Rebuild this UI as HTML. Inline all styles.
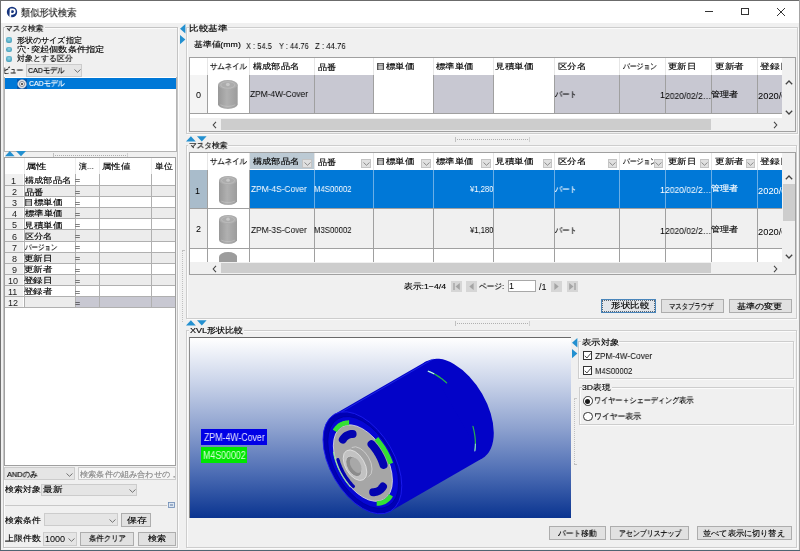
<!DOCTYPE html><html lang="ja"><head><meta charset="utf-8"><title>類似形状検索</title><style>
*{margin:0;padding:0;box-sizing:border-box}
html,body{width:800px;height:551px;overflow:hidden;background:#f0f0f0}
body{position:relative;font-family:"Liberation Sans",sans-serif;font-size:9px;color:#000}
div,span,svg{position:absolute}
.t{white-space:nowrap;line-height:10px;will-change:transform}
.k{-webkit-text-stroke:0.15px currentColor}
.btn{background:#e1e1e1;border:1px solid #adadad}
</style></head><body>
<div style="left:0px;top:0px;width:800px;height:23px;background:#fff"></div>
<div style="left:0px;top:0px;width:800px;height:1px;background:#6b6b6b"></div>
<div style="left:0px;top:0px;width:1px;height:551px;background:#707070"></div>
<div style="left:799px;top:0px;width:1px;height:551px;background:#a4a4a4"></div>
<div style="left:0px;top:550px;width:800px;height:1px;background:#4f6472"></div>
<svg style="left:5.8px;top:6px" width="12" height="12" viewBox="0 0 12 12"><circle cx="6" cy="6" r="5.2" fill="#15347e"/><path d="M4.3 10.9L4.6 3.2" stroke="#fff" stroke-width="1.7"/><path d="M4.2 3.4H6.6A2.2 2.2 0 0 1 6.6 7.8H5" fill="none" stroke="#fff" stroke-width="1.7"/><circle cx="6.4" cy="5.6" r="0.8" fill="#15347e"/></svg>
<span class="t k" style="left:20.68px;top:7.60px;font-size:9.5px;color:#1a1a1a;transform:scaleX(0.922);transform-origin:0 0;">類似形状検索</span>
<div style="left:705px;top:11px;width:8px;height:1px;background:#333"></div>
<div style="left:741px;top:8px;width:8px;height:7px;border:1px solid #333"></div>
<svg style="left:777px;top:8px" width="8" height="8" viewBox="0 0 8 8"><path d="M0 0L8 8M8 0L0 8" stroke="#333" stroke-width="1"/></svg>
<div style="left:3px;top:27.3px;width:174.5px;height:521px;border:1px solid #c4c4c4;box-shadow:inset 1px 1px 0 #fbfbfb,1px 1px 0 #fbfbfb"></div>
<div style="left:4.5px;top:23px;width:40.5px;height:8px;background:#f0f0f0"></div>
<span class="t k" style="left:4.74px;top:24.00px;font-size:8px;transform:scaleX(0.956);transform-origin:0 0;">マスタ検索</span>
<div style="left:6.2px;top:37.0px;width:6.2px;height:5.8px;background:radial-gradient(circle at 50% 40%,#8fd4e6,#2f8fae);border-radius:2.2px"></div>
<span class="t k" style="left:16.80px;top:36.20px;font-size:8px;transform:scaleX(1.011);transform-origin:0 0;">形状のサイズ指定</span>
<div style="left:6.2px;top:46.5px;width:6.2px;height:5.8px;background:radial-gradient(circle at 50% 40%,#8fd4e6,#2f8fae);border-radius:2.2px"></div>
<span class="t k" style="left:16.80px;top:45.00px;font-size:8px;transform:scaleX(1.152);transform-origin:0 0;">穴･突起個数条件指定</span>
<div style="left:6.2px;top:56.0px;width:6.2px;height:5.8px;background:radial-gradient(circle at 50% 40%,#8fd4e6,#2f8fae);border-radius:2.2px"></div>
<span class="t k" style="left:16.80px;top:54.40px;font-size:8px;transform:scaleX(0.995);transform-origin:0 0;">対象とする区分</span>
<span class="t k" style="left:3.25px;top:65.80px;font-size:8px;transform:scaleX(0.845);transform-origin:0 0;">ビュー</span>
<div style="left:26.1px;top:64.4px;width:55.7px;height:12.4px;background:#e5e5e5;border:1px solid #cccccc"></div>
<span class="t k" style="left:28.20px;top:65.80px;font-size:8px;transform:scaleX(0.888);transform-origin:0 0;">CADモデル</span>
<svg style="left:73.5px;top:69.2px" width="7" height="4"><path d="M0.5 0.5L3.5 3.3L6.5 0.5" fill="none" stroke="#555" stroke-width="0.8"/></svg>
<div style="left:4px;top:77px;width:173px;height:75px;background:#fff;border:1px solid #b4b4b4;border-top:none"></div>
<div style="left:5px;top:77.8px;width:171px;height:10.8px;background:#0078d7"></div>
<svg style="left:17px;top:78.5px" width="10" height="10" viewBox="0 0 10 10"><rect x="0" y="0" width="10" height="10" fill="#0a3a8a" opacity="0.55"/><circle cx="5" cy="5" r="4.3" fill="#e6e6e6" stroke="#b8c8d8" stroke-width="0.6"/><circle cx="5" cy="5" r="2.6" fill="none" stroke="#8a8a9a" stroke-width="0.9"/><circle cx="5" cy="5" r="1" fill="#333"/></svg>
<span class="t k" style="left:28.90px;top:78.90px;font-size:8px;color:#fff;transform:scaleX(0.871);transform-origin:0 0;">CADモデル</span>
<svg style="left:5px;top:151.4px" width="22" height="6"><path d="M0 5.2L4.8 0L9.6 5.2Z" fill="#2390d0"/><path d="M11 0L21 0L16 5.2Z" fill="#2390d0"/></svg>
<div style="left:53px;top:154.5px;width:74.5px;height:1px;border-top:1px dotted #b0b0b0"></div>
<div style="left:53px;top:152.5px;width:1px;height:5px;background:#c0c0c0"></div>
<div style="left:126.5px;top:152.5px;width:1px;height:5px;background:#d0d0d0"></div>
<div style="left:4.2px;top:157px;width:171.8px;height:308.5px;background:#fff;border:1px solid #a0a0a0"></div>
<div style="left:5.2px;top:174.1px;width:18.3px;height:11.15px;background:#f0f0f0"></div>
<div style="left:5.2px;top:185.25px;width:18.3px;height:11.15px;background:#f0f0f0"></div>
<div style="left:23.5px;top:185.25px;width:151.5px;height:11.15px;background:#ececec"></div>
<div style="left:5.2px;top:196.4px;width:18.3px;height:11.15px;background:#f0f0f0"></div>
<div style="left:5.2px;top:207.55px;width:18.3px;height:11.15px;background:#f0f0f0"></div>
<div style="left:23.5px;top:207.55px;width:151.5px;height:11.15px;background:#ececec"></div>
<div style="left:5.2px;top:218.7px;width:18.3px;height:11.15px;background:#f0f0f0"></div>
<div style="left:5.2px;top:229.85px;width:18.3px;height:11.15px;background:#f0f0f0"></div>
<div style="left:23.5px;top:229.85px;width:151.5px;height:11.15px;background:#ececec"></div>
<div style="left:5.2px;top:241.0px;width:18.3px;height:11.15px;background:#f0f0f0"></div>
<div style="left:5.2px;top:252.14999999999998px;width:18.3px;height:11.15px;background:#f0f0f0"></div>
<div style="left:23.5px;top:252.14999999999998px;width:151.5px;height:11.15px;background:#ececec"></div>
<div style="left:5.2px;top:263.3px;width:18.3px;height:11.15px;background:#f0f0f0"></div>
<div style="left:5.2px;top:274.45px;width:18.3px;height:11.15px;background:#f0f0f0"></div>
<div style="left:23.5px;top:274.45px;width:151.5px;height:11.15px;background:#ececec"></div>
<div style="left:5.2px;top:285.6px;width:18.3px;height:11.15px;background:#f0f0f0"></div>
<div style="left:5.2px;top:296.75px;width:18.3px;height:11.15px;background:#f0f0f0"></div>
<div style="left:23.5px;top:296.75px;width:51.7px;height:11.15px;background:#ececec"></div>
<div style="left:75.2px;top:296.75px;width:99.8px;height:11.15px;background:#c8c8d2"></div>
<div style="left:5.2px;top:184.75px;width:169.8px;height:1px;background:#b0b0b0"></div>
<div style="left:5.2px;top:195.9px;width:169.8px;height:1px;background:#b0b0b0"></div>
<div style="left:5.2px;top:207.05px;width:169.8px;height:1px;background:#b0b0b0"></div>
<div style="left:5.2px;top:218.2px;width:169.8px;height:1px;background:#b0b0b0"></div>
<div style="left:5.2px;top:229.35px;width:169.8px;height:1px;background:#b0b0b0"></div>
<div style="left:5.2px;top:240.5px;width:169.8px;height:1px;background:#b0b0b0"></div>
<div style="left:5.2px;top:251.64999999999998px;width:169.8px;height:1px;background:#b0b0b0"></div>
<div style="left:5.2px;top:262.8px;width:169.8px;height:1px;background:#b0b0b0"></div>
<div style="left:5.2px;top:273.95px;width:169.8px;height:1px;background:#b0b0b0"></div>
<div style="left:5.2px;top:285.1px;width:169.8px;height:1px;background:#b0b0b0"></div>
<div style="left:5.2px;top:296.25px;width:169.8px;height:1px;background:#b0b0b0"></div>
<div style="left:5.2px;top:307.4px;width:169.8px;height:1px;background:#b0b0b0"></div>
<div style="left:23.5px;top:174.1px;width:1px;height:133.8px;background:#b0b0b0"></div>
<div style="left:23.5px;top:158px;width:1px;height:16.099999999999994px;background:#ececec"></div>
<div style="left:75.2px;top:174.1px;width:1px;height:133.8px;background:#b0b0b0"></div>
<div style="left:75.2px;top:158px;width:1px;height:16.099999999999994px;background:#ececec"></div>
<div style="left:99px;top:174.1px;width:1px;height:133.8px;background:#b0b0b0"></div>
<div style="left:99px;top:158px;width:1px;height:16.099999999999994px;background:#ececec"></div>
<div style="left:150.5px;top:174.1px;width:1px;height:133.8px;background:#b0b0b0"></div>
<div style="left:150.5px;top:158px;width:1px;height:16.099999999999994px;background:#ececec"></div>
<span class="t k" style="left:25.61px;top:162.00px;font-size:8px;transform:scaleX(1.293);transform-origin:0 0;">属性</span>
<span class="t k" style="left:78.80px;top:161.50px;font-size:8px;transform:scaleX(0.947);transform-origin:0 0;">演…</span>
<span class="t k" style="left:101.82px;top:162.00px;font-size:8px;transform:scaleX(1.182);transform-origin:0 0;">属性値</span>
<span class="t k" style="left:154.50px;top:162.00px;font-size:8px;transform:scaleX(1.100);transform-origin:0 0;">単位</span>
<span class="t" style="left:11.30px;top:175.80px;font-size:9px;color:#222;">1</span>
<span class="t k" style="left:25.00px;top:175.90px;font-size:8px;transform:scaleX(1.154);transform-origin:0 0;">構成部品名</span>
<span class="t" style="left:75.30px;top:175.40px;font-size:9px;">=</span>
<span class="t" style="left:12.00px;top:186.95px;font-size:9px;color:#222;">2</span>
<span class="t k" style="left:25.00px;top:188.05px;font-size:8px;transform:scaleX(1.167);transform-origin:0 0;">品番</span>
<span class="t" style="left:75.30px;top:186.55px;font-size:9px;">=</span>
<span class="t" style="left:12.00px;top:198.10px;font-size:9px;color:#222;">3</span>
<span class="t k" style="left:23.79px;top:198.20px;font-size:8px;transform:scaleX(1.208);transform-origin:0 0;">目標単価</span>
<span class="t" style="left:75.30px;top:197.70px;font-size:9px;">=</span>
<span class="t" style="left:12.00px;top:209.25px;font-size:9px;color:#222;">4</span>
<span class="t k" style="left:25.00px;top:209.35px;font-size:8px;transform:scaleX(1.169);transform-origin:0 0;">標準単価</span>
<span class="t" style="left:75.30px;top:208.85px;font-size:9px;">=</span>
<span class="t" style="left:12.00px;top:220.40px;font-size:9px;color:#222;">5</span>
<span class="t k" style="left:23.79px;top:220.50px;font-size:8px;transform:scaleX(1.208);transform-origin:0 0;">見積単価</span>
<span class="t" style="left:75.30px;top:220.00px;font-size:9px;">=</span>
<span class="t" style="left:12.00px;top:231.55px;font-size:9px;color:#222;">6</span>
<span class="t k" style="left:25.00px;top:231.65px;font-size:8px;transform:scaleX(1.130);transform-origin:0 0;">区分名</span>
<span class="t" style="left:75.30px;top:231.15px;font-size:9px;">=</span>
<span class="t" style="left:12.00px;top:242.70px;font-size:9px;color:#222;">7</span>
<span class="t k" style="left:25.00px;top:242.80px;font-size:8px;transform:scaleX(0.808);transform-origin:0 0;">バージョン</span>
<span class="t" style="left:75.30px;top:242.30px;font-size:9px;">=</span>
<span class="t" style="left:12.00px;top:253.85px;font-size:9px;color:#222;">8</span>
<span class="t k" style="left:23.82px;top:253.95px;font-size:8px;transform:scaleX(1.182);transform-origin:0 0;">更新日</span>
<span class="t" style="left:75.30px;top:253.45px;font-size:9px;">=</span>
<span class="t" style="left:12.00px;top:265.00px;font-size:9px;color:#222;">9</span>
<span class="t k" style="left:23.82px;top:265.10px;font-size:8px;transform:scaleX(1.182);transform-origin:0 0;">更新者</span>
<span class="t" style="left:75.30px;top:264.60px;font-size:9px;">=</span>
<span class="t" style="left:8.40px;top:276.15px;font-size:9px;color:#222;">10</span>
<span class="t k" style="left:23.82px;top:276.25px;font-size:8px;transform:scaleX(1.182);transform-origin:0 0;">登録日</span>
<span class="t" style="left:75.30px;top:275.75px;font-size:9px;">=</span>
<span class="t" style="left:8.40px;top:287.30px;font-size:9px;color:#222;">11</span>
<span class="t k" style="left:23.82px;top:287.40px;font-size:8px;transform:scaleX(1.182);transform-origin:0 0;">登録者</span>
<span class="t" style="left:75.30px;top:286.90px;font-size:9px;">=</span>
<span class="t" style="left:8.40px;top:298.45px;font-size:9px;color:#222;">12</span>
<span class="t" style="left:75.30px;top:298.05px;font-size:9px;">=</span>
<div style="left:4.4px;top:467.2px;width:70.6px;height:12.8px;background:#e5e5e5;border:1px solid #cccccc"></div>
<span class="t k" style="left:6.75px;top:470.00px;font-size:8px;transform:scaleX(0.923);transform-origin:0 0;">ANDのみ</span>
<svg style="left:66px;top:473px" width="7" height="4"><path d="M0.5 0.5L3.5 3.3L6.5 0.5" fill="none" stroke="#555" stroke-width="0.8"/></svg>
<div style="left:77.5px;top:467.2px;width:98.5px;height:12.8px;background:#f5f5f5;border:1px solid #cccccc"></div>
<span class="t k" style="left:80.00px;top:469.50px;font-size:8px;color:#8a8a8a;transform:scaleX(1.022);transform-origin:0 0;">検索条件の組み合わせの，</span>
<span class="t k" style="left:5.00px;top:484.60px;font-size:8px;transform:scaleX(1.110);transform-origin:0 0;">検索対象</span>
<div style="left:41.3px;top:483.7px;width:96.2px;height:12.3px;background:#e5e5e5;border:1px solid #cccccc"></div>
<span class="t k" style="left:42.80px;top:484.60px;font-size:8px;transform:scaleX(1.200);transform-origin:0 0;">最新</span>
<svg style="left:129px;top:488.5px" width="7" height="4"><path d="M0.5 0.5L3.5 3.3L6.5 0.5" fill="none" stroke="#555" stroke-width="0.8"/></svg>
<div style="left:4.5px;top:505px;width:162.5px;height:1px;background:#c8c8c8"></div>
<svg style="left:168px;top:502px" width="7" height="6"><rect x="0.5" y="0.5" width="6" height="5" fill="#dde6f0" stroke="#6b8bb5" stroke-width="0.8"/><path d="M2 3H5" stroke="#3a5a90" stroke-width="0.8"/></svg>
<span class="t k" style="left:5.00px;top:515.60px;font-size:8px;transform:scaleX(1.109);transform-origin:0 0;">検索条件</span>
<div style="left:44px;top:512.9px;width:73.5px;height:13.5px;background:#e5e5e5;border:1px solid #cccccc"></div>
<svg style="left:109px;top:518.5px" width="7" height="4"><path d="M0.5 0.5L3.5 3.3L6.5 0.5" fill="none" stroke="#555" stroke-width="0.8"/></svg>
<div class="btn" style="left:121.3px;top:513px;width:30.1px;height:14px"></div>
<span class="t k" style="left:126.76px;top:515.60px;font-size:8px;transform:scaleX(1.236);transform-origin:0 0;">保存</span>
<span class="t k" style="left:5.00px;top:534.00px;font-size:8px;transform:scaleX(1.109);transform-origin:0 0;">上限件数</span>
<div style="left:43px;top:532px;width:33.7px;height:13.7px;background:#e5e5e5;border:1px solid #cccccc"></div>
<span class="t" style="left:45.19px;top:533.50px;font-size:9px;transform:scaleX(1.005);transform-origin:0 0;">1000</span>
<svg style="left:68px;top:537.5px" width="7" height="4"><path d="M0.5 0.5L3.5 3.3L6.5 0.5" fill="none" stroke="#555" stroke-width="0.8"/></svg>
<div class="btn" style="left:79.8px;top:532px;width:54.6px;height:13.7px"></div>
<span class="t k" style="left:89.00px;top:534.00px;font-size:8px;transform:scaleX(0.923);transform-origin:0 0;">条件クリア</span>
<div class="btn" style="left:138.4px;top:532px;width:37.4px;height:13.7px"></div>
<span class="t k" style="left:147.50px;top:534.00px;font-size:8px;transform:scaleX(1.125);transform-origin:0 0;">検索</span>
<svg style="left:179.8px;top:24px" width="6" height="21"><path d="M5.4 0L0 4.7L5.4 9.4Z" fill="#2390d0"/><path d="M0 10.9L5.4 15.6L0 20.3Z" fill="#2390d0"/></svg>
<div style="left:186.3px;top:27.3px;width:611.5px;height:106.7px;border:1px solid #cdcdcd;box-shadow:inset 1px 1px 0 #fbfbfb,1px 1px 0 #fbfbfb"></div>
<div style="left:189.1px;top:24.3px;width:39.099999999999994px;height:6px;background:#f0f0f0"></div>
<span class="t k" style="left:189.40px;top:23.50px;font-size:8px;transform:scaleX(1.203);transform-origin:0 0;">比較基準</span>
<span class="t k" style="left:193.90px;top:40.40px;font-size:8px;transform:scaleX(1.098);transform-origin:0 0;">基準値(mm)</span>
<span class="t" style="left:245.80px;top:40.50px;font-size:9px;transform:scaleX(0.835);transform-origin:0 0;">X : 54.5</span>
<span class="t" style="left:278.50px;top:40.50px;font-size:9px;transform:scaleX(0.831);transform-origin:0 0;">Y : 44.76</span>
<span class="t" style="left:315.20px;top:40.50px;font-size:9px;transform:scaleX(0.863);transform-origin:0 0;">Z : 44.76</span>
<div style="left:188.5px;top:56.6px;width:607.0px;height:75.4px;background:#fff;border:1px solid #a0a0a0"></div>
<div style="left:782px;top:57.6px;width:13px;height:60.4px;background:#f0f0f0"></div>
<div style="left:207.4px;top:57.6px;width:1px;height:17.4px;background:#e6e6e6"></div>
<div style="left:249px;top:57.6px;width:1px;height:17.4px;background:#e6e6e6"></div>
<div style="left:313.5px;top:57.6px;width:1px;height:17.4px;background:#e6e6e6"></div>
<div style="left:372.5px;top:57.6px;width:1px;height:17.4px;background:#e6e6e6"></div>
<div style="left:432.5px;top:57.6px;width:1px;height:17.4px;background:#e6e6e6"></div>
<div style="left:492.5px;top:57.6px;width:1px;height:17.4px;background:#e6e6e6"></div>
<div style="left:553.75px;top:57.6px;width:1px;height:17.4px;background:#e6e6e6"></div>
<div style="left:618.75px;top:57.6px;width:1px;height:17.4px;background:#e6e6e6"></div>
<div style="left:665px;top:57.6px;width:1px;height:17.4px;background:#e6e6e6"></div>
<div style="left:711px;top:57.6px;width:1px;height:17.4px;background:#e6e6e6"></div>
<div style="left:757px;top:57.6px;width:1px;height:17.4px;background:#e6e6e6"></div>
<span class="t k" style="left:210.08px;top:61.80px;font-size:8px;transform:scaleX(0.923);transform-origin:0 0;">サムネイル</span>
<span class="t k" style="left:253.00px;top:61.80px;font-size:8px;transform:scaleX(1.154);transform-origin:0 0;">構成部品名</span>
<span class="t k" style="left:317.90px;top:62.80px;font-size:8px;transform:scaleX(1.140);transform-origin:0 0;">品番</span>
<span class="t k" style="left:375.80px;top:61.80px;font-size:8px;transform:scaleX(1.200);transform-origin:0 0;">目標単価</span>
<span class="t k" style="left:436.25px;top:61.80px;font-size:8px;transform:scaleX(1.169);transform-origin:0 0;">標準単価</span>
<span class="t k" style="left:495.04px;top:61.80px;font-size:8px;transform:scaleX(1.208);transform-origin:0 0;">見積単価</span>
<span class="t k" style="left:557.50px;top:61.80px;font-size:8px;transform:scaleX(1.174);transform-origin:0 0;">区分名</span>
<span class="t k" style="left:622.50px;top:61.80px;font-size:8px;transform:scaleX(0.849);transform-origin:0 0;">バージョン</span>
<span class="t k" style="left:668.04px;top:61.80px;font-size:8px;transform:scaleX(1.164);transform-origin:0 0;">更新日</span>
<span class="t k" style="left:714.50px;top:61.80px;font-size:8px;transform:scaleX(1.195);transform-origin:0 0;">更新者</span>
<div style="left:758px;top:57.6px;width:24px;height:18.4px;overflow:hidden">
<span class="t k" style="left:1.77px;top:4.20px;font-size:8px;transform:scaleX(1.227);transform-origin:0 0;">登録日</span>
</div>
<div style="left:189.5px;top:75px;width:17.900000000000006px;height:38.5px;background:#f4f4f4"></div>
<div style="left:249px;top:75px;width:64.5px;height:38.5px;background:#c8c8d2"></div>
<div style="left:313.5px;top:75px;width:59.0px;height:38.5px;background:#c8c8d2"></div>
<div style="left:432.5px;top:75px;width:60.0px;height:38.5px;background:#c8c8d2"></div>
<div style="left:553.75px;top:75px;width:65.0px;height:38.5px;background:#c8c8d2"></div>
<div style="left:618.75px;top:75px;width:46.25px;height:38.5px;background:#c8c8d2"></div>
<div style="left:665px;top:75px;width:46px;height:38.5px;background:#c8c8d2"></div>
<div style="left:711px;top:75px;width:46px;height:38.5px;background:#c8c8d2"></div>
<div style="left:757px;top:75px;width:25px;height:38.5px;background:#c8c8d2"></div>
<div style="left:207.4px;top:75px;width:1px;height:38.5px;background:#a0a0a0"></div>
<div style="left:249px;top:75px;width:1px;height:38.5px;background:#a0a0a0"></div>
<div style="left:313.5px;top:75px;width:1px;height:38.5px;background:#a0a0a0"></div>
<div style="left:372.5px;top:75px;width:1px;height:38.5px;background:#a0a0a0"></div>
<div style="left:432.5px;top:75px;width:1px;height:38.5px;background:#a0a0a0"></div>
<div style="left:492.5px;top:75px;width:1px;height:38.5px;background:#a0a0a0"></div>
<div style="left:553.75px;top:75px;width:1px;height:38.5px;background:#a0a0a0"></div>
<div style="left:618.75px;top:75px;width:1px;height:38.5px;background:#a0a0a0"></div>
<div style="left:665px;top:75px;width:1px;height:38.5px;background:#a0a0a0"></div>
<div style="left:711px;top:75px;width:1px;height:38.5px;background:#a0a0a0"></div>
<div style="left:757px;top:75px;width:1px;height:38.5px;background:#a0a0a0"></div>
<span class="t" style="left:195.50px;top:89.50px;font-size:9px;color:#000;">0</span>
<span class="t" style="left:249.80px;top:89.25px;font-size:9px;color:#000;transform:scaleX(0.931);transform-origin:0 0;">ZPM-4W-Cover</span>
<span class="t k" style="left:555.00px;top:89.80px;font-size:8px;color:#000;transform:scaleX(0.909);transform-origin:0 0;">パート</span>
<span class="t" style="left:659.60px;top:90.00px;font-size:9px;color:#000;">1</span>
<span class="t" style="left:665.30px;top:91.00px;font-size:9px;color:#000;transform:scaleX(0.944);transform-origin:0 0;">2020/02/2…</span>
<span class="t k" style="left:711.06px;top:90.00px;font-size:8px;color:#000;transform:scaleX(1.136);transform-origin:0 0;">管理者</span>
<div style="left:758px;top:75px;width:24px;height:38.5px;overflow:hidden">
<span class="t" style="left:0.00px;top:16.00px;font-size:9px;color:#000;transform:scaleX(1.037);transform-origin:0 0;">2020/0</span>
</div>
<div style="left:189.5px;top:113.0px;width:592.5px;height:1px;background:#a0a0a0"></div>
<svg style="left:785px;top:80px" width="8" height="5"><path d="M0.8 4.2L4 1L7.2 4.2" fill="none" stroke="#444" stroke-width="1.3"/></svg>
<svg style="left:785px;top:109.5px" width="8" height="5"><path d="M0.8 0.8L4 4L7.2 0.8" fill="none" stroke="#444" stroke-width="1.3"/></svg>
<div style="left:189.5px;top:118px;width:592.5px;height:13px;background:#f0f0f0"></div>
<div style="left:221px;top:119px;width:490px;height:11px;background:#cdcdcd"></div>
<div style="left:782px;top:118px;width:13px;height:13px;background:#f0f0f0"></div>
<svg style="left:211.5px;top:121px" width="5" height="8"><path d="M4 0.8L1.2 4L4 7.2" fill="none" stroke="#444" stroke-width="1.1"/></svg>
<svg style="left:773px;top:121px" width="5" height="8"><path d="M1 0.8L3.8 4L1 7.2" fill="none" stroke="#444" stroke-width="1.1"/></svg>
<svg style="left:218px;top:80px" width="19.7" height="29" viewBox="0 0 19.7 29"><defs><linearGradient id="cg1" x1="0" x2="1"><stop offset="0" stop-color="#989898"/><stop offset="0.45" stop-color="#b0b0b0"/><stop offset="1" stop-color="#9c9c9c"/></linearGradient></defs><path d="M0 4.728 V24.272 A9.85 4.728 0 0 0 19.7 24.272 V4.728 Z" fill="url(#cg1)"/><ellipse cx="9.85" cy="4.728" rx="9.85" ry="4.728" fill="#acacac"/><ellipse cx="9.85" cy="4.9644" rx="7.092" ry="3.3095999999999997" fill="none" stroke="#c4c4c4" stroke-width="0.6"/><ellipse cx="9.85" cy="4.491599999999999" rx="1.97" ry="1.773" fill="#c8c8c8"/><path d="M2.364 24.744799999999998 A9.85 4.728 0 0 0 17.336 24.744799999999998" fill="none" stroke="#c6c6c6" stroke-width="0.6"/></svg>
<div style="left:455px;top:138.6px;width:74.5px;height:1px;border-top:1px dotted #b0b0b0"></div>
<div style="left:455px;top:136.6px;width:1px;height:5px;background:#c0c0c0"></div>
<div style="left:528.5px;top:136.6px;width:1px;height:5px;background:#d0d0d0"></div>
<svg style="left:185.7px;top:135.8px" width="22" height="6"><path d="M0 5.6L4.9 0.2L9.8 5.6Z" fill="#2390d0"/><path d="M11 0.2L20.6 0.2L15.8 5.6Z" fill="#2390d0"/></svg>
<div style="left:186.3px;top:145px;width:611.2px;height:174px;border:1px solid #cdcdcd;box-shadow:inset 1px 1px 0 #fbfbfb,1px 1px 0 #fbfbfb"></div>
<div style="left:188.1px;top:142px;width:40.400000000000006px;height:6px;background:#f0f0f0"></div>
<span class="t k" style="left:188.64px;top:141.00px;font-size:8px;transform:scaleX(0.959);transform-origin:0 0;">マスタ検索</span>
<div style="left:188.5px;top:151.7px;width:607.0px;height:123.60000000000002px;background:#fff;border:1px solid #a0a0a0"></div>
<div style="left:782px;top:152.7px;width:13px;height:109.30000000000001px;background:#f0f0f0"></div>
<div style="left:207.4px;top:152.7px;width:1px;height:17.30000000000001px;background:#e6e6e6"></div>
<div style="left:249px;top:152.7px;width:1px;height:17.30000000000001px;background:#e6e6e6"></div>
<div style="left:313.5px;top:152.7px;width:1px;height:17.30000000000001px;background:#e6e6e6"></div>
<div style="left:372.5px;top:152.7px;width:1px;height:17.30000000000001px;background:#e6e6e6"></div>
<div style="left:432.5px;top:152.7px;width:1px;height:17.30000000000001px;background:#e6e6e6"></div>
<div style="left:492.5px;top:152.7px;width:1px;height:17.30000000000001px;background:#e6e6e6"></div>
<div style="left:553.75px;top:152.7px;width:1px;height:17.30000000000001px;background:#e6e6e6"></div>
<div style="left:618.75px;top:152.7px;width:1px;height:17.30000000000001px;background:#e6e6e6"></div>
<div style="left:665px;top:152.7px;width:1px;height:17.30000000000001px;background:#e6e6e6"></div>
<div style="left:711px;top:152.7px;width:1px;height:17.30000000000001px;background:#e6e6e6"></div>
<div style="left:757px;top:152.7px;width:1px;height:17.30000000000001px;background:#e6e6e6"></div>
<div style="left:250px;top:152.7px;width:64.0px;height:16.80000000000001px;background:#bccad4"></div>
<span class="t k" style="left:210.08px;top:157.00px;font-size:8px;transform:scaleX(0.923);transform-origin:0 0;">サムネイル</span>
<span class="t k" style="left:253.00px;top:157.00px;font-size:8px;transform:scaleX(1.154);transform-origin:0 0;">構成部品名</span>
<div style="left:302.3px;top:159.0px;width:9.5px;height:8.5px;background:#e0e0e0;border:1px solid #c4c4c4"></div>
<svg style="left:303.8px;top:162.2px" width="7" height="4"><path d="M0.5 0.5L3.5 3.3L6.5 0.5" fill="none" stroke="#777" stroke-width="0.8"/></svg>
<span class="t k" style="left:317.90px;top:158.00px;font-size:8px;transform:scaleX(1.140);transform-origin:0 0;">品番</span>
<div style="left:361.3px;top:159.0px;width:9.5px;height:8.5px;background:#e0e0e0;border:1px solid #c4c4c4"></div>
<svg style="left:362.8px;top:162.2px" width="7" height="4"><path d="M0.5 0.5L3.5 3.3L6.5 0.5" fill="none" stroke="#777" stroke-width="0.8"/></svg>
<span class="t k" style="left:375.80px;top:157.00px;font-size:8px;transform:scaleX(1.200);transform-origin:0 0;">目標単価</span>
<div style="left:421.3px;top:159.0px;width:9.5px;height:8.5px;background:#e0e0e0;border:1px solid #c4c4c4"></div>
<svg style="left:422.8px;top:162.2px" width="7" height="4"><path d="M0.5 0.5L3.5 3.3L6.5 0.5" fill="none" stroke="#777" stroke-width="0.8"/></svg>
<span class="t k" style="left:436.25px;top:157.00px;font-size:8px;transform:scaleX(1.169);transform-origin:0 0;">標準単価</span>
<div style="left:481.3px;top:159.0px;width:9.5px;height:8.5px;background:#e0e0e0;border:1px solid #c4c4c4"></div>
<svg style="left:482.8px;top:162.2px" width="7" height="4"><path d="M0.5 0.5L3.5 3.3L6.5 0.5" fill="none" stroke="#777" stroke-width="0.8"/></svg>
<span class="t k" style="left:495.04px;top:157.00px;font-size:8px;transform:scaleX(1.208);transform-origin:0 0;">見積単価</span>
<div style="left:542.55px;top:159.0px;width:9.5px;height:8.5px;background:#e0e0e0;border:1px solid #c4c4c4"></div>
<svg style="left:544.05px;top:162.2px" width="7" height="4"><path d="M0.5 0.5L3.5 3.3L6.5 0.5" fill="none" stroke="#777" stroke-width="0.8"/></svg>
<span class="t k" style="left:557.50px;top:157.00px;font-size:8px;transform:scaleX(1.174);transform-origin:0 0;">区分名</span>
<div style="left:607.55px;top:159.0px;width:9.5px;height:8.5px;background:#e0e0e0;border:1px solid #c4c4c4"></div>
<svg style="left:609.05px;top:162.2px" width="7" height="4"><path d="M0.5 0.5L3.5 3.3L6.5 0.5" fill="none" stroke="#777" stroke-width="0.8"/></svg>
<span class="t k" style="left:622.50px;top:157.00px;font-size:8px;transform:scaleX(0.849);transform-origin:0 0;">バージョン</span>
<div style="left:653.8px;top:159.0px;width:9.5px;height:8.5px;background:#e0e0e0;border:1px solid #c4c4c4"></div>
<svg style="left:655.3px;top:162.2px" width="7" height="4"><path d="M0.5 0.5L3.5 3.3L6.5 0.5" fill="none" stroke="#777" stroke-width="0.8"/></svg>
<span class="t k" style="left:668.04px;top:157.00px;font-size:8px;transform:scaleX(1.164);transform-origin:0 0;">更新日</span>
<div style="left:699.8px;top:159.0px;width:9.5px;height:8.5px;background:#e0e0e0;border:1px solid #c4c4c4"></div>
<svg style="left:701.3px;top:162.2px" width="7" height="4"><path d="M0.5 0.5L3.5 3.3L6.5 0.5" fill="none" stroke="#777" stroke-width="0.8"/></svg>
<span class="t k" style="left:714.50px;top:157.00px;font-size:8px;transform:scaleX(1.195);transform-origin:0 0;">更新者</span>
<div style="left:745.8px;top:159.0px;width:9.5px;height:8.5px;background:#e0e0e0;border:1px solid #c4c4c4"></div>
<svg style="left:747.3px;top:162.2px" width="7" height="4"><path d="M0.5 0.5L3.5 3.3L6.5 0.5" fill="none" stroke="#777" stroke-width="0.8"/></svg>
<div style="left:758px;top:152.7px;width:24px;height:18.30000000000001px;overflow:hidden">
<span class="t k" style="left:1.77px;top:4.30px;font-size:8px;transform:scaleX(1.227);transform-origin:0 0;">登録日</span>
</div>
<div style="left:189.5px;top:170px;width:17.900000000000006px;height:38.6px;background:#a9bccb"></div>
<div style="left:249px;top:170px;width:533px;height:38.6px;background:#0078d7"></div>
<div style="left:207.4px;top:170px;width:1px;height:38.6px;background:#a0a0a0"></div>
<div style="left:249px;top:170px;width:1px;height:38.6px;background:#a0a0a0"></div>
<div style="left:313.5px;top:170px;width:1px;height:38.6px;background:#6aaee6"></div>
<div style="left:372.5px;top:170px;width:1px;height:38.6px;background:#6aaee6"></div>
<div style="left:432.5px;top:170px;width:1px;height:38.6px;background:#6aaee6"></div>
<div style="left:492.5px;top:170px;width:1px;height:38.6px;background:#6aaee6"></div>
<div style="left:553.75px;top:170px;width:1px;height:38.6px;background:#6aaee6"></div>
<div style="left:618.75px;top:170px;width:1px;height:38.6px;background:#6aaee6"></div>
<div style="left:665px;top:170px;width:1px;height:38.6px;background:#6aaee6"></div>
<div style="left:711px;top:170px;width:1px;height:38.6px;background:#6aaee6"></div>
<div style="left:757px;top:170px;width:1px;height:38.6px;background:#6aaee6"></div>
<span class="t" style="left:195.00px;top:185.60px;font-size:9px;color:#000;">1</span>
<span class="t" style="left:250.50px;top:183.50px;font-size:9px;color:#fff;transform:scaleX(0.929);transform-origin:0 0;">ZPM-4S-Cover</span>
<span class="t" style="left:314.14px;top:183.80px;font-size:9px;color:#fff;transform:scaleX(0.863);transform-origin:0 0;">M4S00002</span>
<span class="t" style="left:469.50px;top:183.50px;font-size:9px;color:#fff;transform:scaleX(0.852);transform-origin:0 0;">¥1,280</span>
<span class="t k" style="left:555.00px;top:185.30px;font-size:8px;color:#fff;transform:scaleX(0.909);transform-origin:0 0;">パート</span>
<span class="t" style="left:659.60px;top:184.50px;font-size:9px;color:#fff;">1</span>
<span class="t" style="left:665.30px;top:184.50px;font-size:9px;color:#fff;transform:scaleX(0.944);transform-origin:0 0;">2020/02/2…</span>
<span class="t k" style="left:711.06px;top:184.00px;font-size:8px;color:#fff;transform:scaleX(1.136);transform-origin:0 0;">管理者</span>
<div style="left:758px;top:170px;width:24px;height:38.6px;overflow:hidden">
<span class="t" style="left:0.00px;top:15.50px;font-size:9px;color:#fff;transform:scaleX(1.037);transform-origin:0 0;">2020/0</span>
</div>
<div style="left:189.5px;top:208.1px;width:592.5px;height:1px;background:#a0a0a0"></div>
<div style="left:189.5px;top:208.6px;width:17.900000000000006px;height:39.4px;background:#f0f0f0"></div>
<div style="left:249px;top:208.6px;width:533px;height:39.4px;background:#f0f0f0"></div>
<div style="left:207.4px;top:208.6px;width:1px;height:39.4px;background:#a0a0a0"></div>
<div style="left:249px;top:208.6px;width:1px;height:39.4px;background:#a0a0a0"></div>
<div style="left:313.5px;top:208.6px;width:1px;height:39.4px;background:#a0a0a0"></div>
<div style="left:372.5px;top:208.6px;width:1px;height:39.4px;background:#a0a0a0"></div>
<div style="left:432.5px;top:208.6px;width:1px;height:39.4px;background:#a0a0a0"></div>
<div style="left:492.5px;top:208.6px;width:1px;height:39.4px;background:#a0a0a0"></div>
<div style="left:553.75px;top:208.6px;width:1px;height:39.4px;background:#a0a0a0"></div>
<div style="left:618.75px;top:208.6px;width:1px;height:39.4px;background:#a0a0a0"></div>
<div style="left:665px;top:208.6px;width:1px;height:39.4px;background:#a0a0a0"></div>
<div style="left:711px;top:208.6px;width:1px;height:39.4px;background:#a0a0a0"></div>
<div style="left:757px;top:208.6px;width:1px;height:39.4px;background:#a0a0a0"></div>
<span class="t" style="left:196.00px;top:224.40px;font-size:9px;color:#000;">2</span>
<span class="t" style="left:250.50px;top:224.60px;font-size:9px;color:#000;transform:scaleX(0.929);transform-origin:0 0;">ZPM-3S-Cover</span>
<span class="t" style="left:314.14px;top:224.90px;font-size:9px;color:#000;transform:scaleX(0.863);transform-origin:0 0;">M3S00002</span>
<span class="t" style="left:469.50px;top:224.60px;font-size:9px;color:#000;transform:scaleX(0.852);transform-origin:0 0;">¥1,180</span>
<span class="t k" style="left:555.00px;top:226.40px;font-size:8px;color:#000;transform:scaleX(0.909);transform-origin:0 0;">パート</span>
<span class="t" style="left:659.60px;top:225.60px;font-size:9px;color:#000;">1</span>
<span class="t" style="left:665.30px;top:225.60px;font-size:9px;color:#000;transform:scaleX(0.944);transform-origin:0 0;">2020/02/2…</span>
<span class="t k" style="left:711.06px;top:225.10px;font-size:8px;color:#000;transform:scaleX(1.136);transform-origin:0 0;">管理者</span>
<div style="left:758px;top:208.6px;width:24px;height:39.4px;overflow:hidden">
<span class="t" style="left:0.00px;top:18.00px;font-size:9px;color:#000;transform:scaleX(1.037);transform-origin:0 0;">2020/0</span>
</div>
<div style="left:189.5px;top:247.5px;width:592.5px;height:1px;background:#a0a0a0"></div>
<div style="left:207.4px;top:248.0px;width:1px;height:14.0px;background:#a0a0a0"></div>
<div style="left:249px;top:248.0px;width:1px;height:14.0px;background:#a0a0a0"></div>
<div style="left:313.5px;top:248.0px;width:1px;height:14.0px;background:#a0a0a0"></div>
<div style="left:372.5px;top:248.0px;width:1px;height:14.0px;background:#a0a0a0"></div>
<div style="left:432.5px;top:248.0px;width:1px;height:14.0px;background:#a0a0a0"></div>
<div style="left:492.5px;top:248.0px;width:1px;height:14.0px;background:#a0a0a0"></div>
<div style="left:553.75px;top:248.0px;width:1px;height:14.0px;background:#a0a0a0"></div>
<div style="left:618.75px;top:248.0px;width:1px;height:14.0px;background:#a0a0a0"></div>
<div style="left:665px;top:248.0px;width:1px;height:14.0px;background:#a0a0a0"></div>
<div style="left:711px;top:248.0px;width:1px;height:14.0px;background:#a0a0a0"></div>
<div style="left:757px;top:248.0px;width:1px;height:14.0px;background:#a0a0a0"></div>
<svg style="left:785px;top:175px" width="8" height="5"><path d="M0.8 4.2L4 1L7.2 4.2" fill="none" stroke="#444" stroke-width="1.3"/></svg>
<svg style="left:785px;top:253.5px" width="8" height="5"><path d="M0.8 0.8L4 4L7.2 0.8" fill="none" stroke="#444" stroke-width="1.3"/></svg>
<div style="left:189.5px;top:262px;width:592.5px;height:12.300000000000011px;background:#f0f0f0"></div>
<div style="left:221px;top:263px;width:490px;height:10.300000000000011px;background:#cdcdcd"></div>
<div style="left:782px;top:262px;width:13px;height:12.300000000000011px;background:#f0f0f0"></div>
<svg style="left:211.5px;top:265px" width="5" height="8"><path d="M4 0.8L1.2 4L4 7.2" fill="none" stroke="#444" stroke-width="1.1"/></svg>
<svg style="left:773px;top:265px" width="5" height="8"><path d="M1 0.8L3.8 4L1 7.2" fill="none" stroke="#444" stroke-width="1.1"/></svg>
<div style="left:782.5px;top:183.6px;width:12px;height:37px;background:#cdcdcd"></div>
<svg style="left:218.9px;top:175.8px" width="18.1" height="29" viewBox="0 0 18.1 29"><defs><linearGradient id="cg2" x1="0" x2="1"><stop offset="0" stop-color="#989898"/><stop offset="0.45" stop-color="#b0b0b0"/><stop offset="1" stop-color="#9c9c9c"/></linearGradient></defs><path d="M0 4.344 V24.656 A9.05 4.344 0 0 0 18.1 24.656 V4.344 Z" fill="url(#cg2)"/><ellipse cx="9.05" cy="4.344" rx="9.05" ry="4.344" fill="#acacac"/><ellipse cx="9.05" cy="4.5612" rx="6.516" ry="3.0408" fill="none" stroke="#c4c4c4" stroke-width="0.6"/><ellipse cx="9.05" cy="4.1268" rx="1.8100000000000003" ry="1.629" fill="#c8c8c8"/><path d="M2.172 25.0904 A9.05 4.344 0 0 0 15.928 25.0904" fill="none" stroke="#c6c6c6" stroke-width="0.6"/></svg>
<svg style="left:218.9px;top:214.6px" width="18.1" height="29" viewBox="0 0 18.1 29"><defs><linearGradient id="cg3" x1="0" x2="1"><stop offset="0" stop-color="#989898"/><stop offset="0.45" stop-color="#b0b0b0"/><stop offset="1" stop-color="#9c9c9c"/></linearGradient></defs><path d="M0 4.344 V24.656 A9.05 4.344 0 0 0 18.1 24.656 V4.344 Z" fill="url(#cg3)"/><ellipse cx="9.05" cy="4.344" rx="9.05" ry="4.344" fill="#acacac"/><ellipse cx="9.05" cy="4.5612" rx="6.516" ry="3.0408" fill="none" stroke="#c4c4c4" stroke-width="0.6"/><ellipse cx="9.05" cy="4.1268" rx="1.8100000000000003" ry="1.629" fill="#c8c8c8"/><path d="M2.172 25.0904 A9.05 4.344 0 0 0 15.928 25.0904" fill="none" stroke="#c6c6c6" stroke-width="0.6"/></svg>
<div style="left:218.6px;top:252px;width:18.2px;height:10px;overflow:hidden"><svg style="left:0;top:0" width="18.2" height="29"><path d="M0 5 V29 H18.2 V5 A9.1 5 0 0 0 0 5Z" fill="#9c9c9c"/></svg></div>
<span class="t k" style="left:404.41px;top:281.50px;font-size:8px;transform:scaleX(1.095);transform-origin:0 0;">表示:1−4/4</span>
<div style="left:450.7px;top:280.5px;width:11px;height:11px;background:#d6d6d6"></div>
<svg style="left:450.7px;top:280.5px" width="11" height="11"><rect x="2.3" y="2" width="1.4" height="7" fill="#a4a4a4"/><path d="M8.8 2V9L4.5 5.5Z" fill="#a4a4a4"/></svg>
<div style="left:465.7px;top:280.5px;width:11px;height:11px;background:#d6d6d6"></div>
<svg style="left:465.7px;top:280.5px" width="11" height="11"><path d="M7.6 2V9L3.3 5.5Z" fill="#a4a4a4"/></svg>
<span class="t k" style="left:479.04px;top:281.50px;font-size:8px;transform:scaleX(0.960);transform-origin:0 0;">ページ:</span>
<div style="left:507.5px;top:279.5px;width:28.3px;height:12.5px;background:#fff;border:1px solid #a8a8a8"></div>
<span class="t" style="left:509.00px;top:280.80px;font-size:9px;">1</span>
<span class="t" style="left:539.00px;top:281.80px;font-size:9px;">/1</span>
<div style="left:551px;top:280.5px;width:11px;height:11px;background:#d6d6d6"></div>
<svg style="left:551px;top:280.5px" width="11" height="11"><path d="M3.4 2V9L7.7 5.5Z" fill="#a4a4a4"/></svg>
<div style="left:566.5px;top:280.5px;width:11px;height:11px;background:#d6d6d6"></div>
<svg style="left:566.5px;top:280.5px" width="11" height="11"><path d="M2.2 2V9L6.5 5.5Z" fill="#a4a4a4"/><rect x="7.3" y="2" width="1.4" height="7" fill="#a4a4a4"/></svg>
<div style="left:601.2px;top:298.7px;width:55px;height:14.3px;background:#e3e6ea;border:1px solid #4a86bb"></div>
<div style="left:602.2px;top:299.7px;width:53px;height:12.3px;border:1px dotted #5a6470"></div>
<span class="t k" style="left:610.50px;top:301.30px;font-size:8px;transform:scaleX(1.194);transform-origin:0 0;">形状比較</span>
<div class="btn" style="left:661.2px;top:298.7px;width:63.3px;height:14.3px"></div>
<span class="t k" style="left:669.20px;top:302.00px;font-size:8px;transform:scaleX(0.795);transform-origin:0 0;">マスタブラウザ</span>
<div class="btn" style="left:729px;top:298.7px;width:62.8px;height:14.3px"></div>
<span class="t k" style="left:737.37px;top:301.80px;font-size:8px;transform:scaleX(1.132);transform-origin:0 0;">基準の変更</span>
<div style="left:455px;top:323px;width:74.5px;height:1px;border-top:1px dotted #b0b0b0"></div>
<div style="left:455px;top:321px;width:1px;height:5px;background:#c0c0c0"></div>
<div style="left:528.5px;top:321px;width:1px;height:5px;background:#d0d0d0"></div>
<svg style="left:185.7px;top:320.2px" width="22" height="6"><path d="M0 5.6L4.9 0.2L9.8 5.6Z" fill="#2390d0"/><path d="M11 0.2L20.6 0.2L15.8 5.6Z" fill="#2390d0"/></svg>
<div style="left:182px;top:250px;width:1px;height:72px;border-left:1px dotted #c0c0c0"></div>
<div style="left:182px;top:249.5px;width:3px;height:1px;background:#c0c0c0"></div>
<div style="left:186.3px;top:330px;width:611.2px;height:217.5px;border:1px solid #cdcdcd;box-shadow:inset 1px 1px 0 #fbfbfb,1px 1px 0 #fbfbfb"></div>
<div style="left:188.5px;top:327px;width:55px;height:6px;background:#f0f0f0"></div>
<span class="t k" style="left:190.00px;top:326.00px;font-size:8px;transform:scaleX(1.130);transform-origin:0 0;">XVL形状比較</span>
<div style="left:188.6px;top:337.2px;width:382.4px;height:180.4px;border-top:1px solid #6a6a6a;border-left:1px solid #8a8a8a;background:linear-gradient(#ffffff 0%,#c9d3e9 25%,#8ea2cf 50%,#4d6db4 75%,#0a3490 100%)"></div>
<svg style="left:189.6px;top:338.2px" width="381.4" height="179.4" viewBox="189.6 338.2 381.4 179.4"><ellipse cx="454.00" cy="410.00" rx="32.00" ry="56.00" transform="rotate(-30 454.00 410.00)" fill="#0303c8" /><path d="M334.00 414.50 L426.00 361.50 L482.00 458.50 L390.00 511.50Z" fill="#0303c8"/><path d="M340.95 412.15 L432.95 359.15" stroke="#3a4cff" stroke-width="0.6" opacity="0.8"/><path d="M427.88 371.45 L428.64 371.73 L429.41 372.03 L430.17 372.35 L430.94 372.69 L431.71 373.04 L432.48 373.42 L433.25 373.81 L434.02 374.22 L434.80 374.65 L435.57 375.09 L436.34 375.56 L437.12 376.04 L437.89 376.54 L438.66 377.05 L439.43 377.59 L440.20 378.13 L440.97 378.70 L441.73 379.28 L442.49 379.88 L443.26 380.49 L444.01 381.12 L444.77 381.76 L445.52 382.42 L446.26 383.09" stroke="#28b050" stroke-width="1.3" fill="none" stroke-linecap="round"/><path d="M427.88 371.45 L428.11 371.53 L428.33 371.61 L428.56 371.70 L428.78 371.78 L429.01 371.87 L429.24 371.96 L429.46 372.05 L429.69 372.14 L429.92 372.24 L430.14 372.34 L430.37 372.43 L430.60 372.53 L430.82 372.63 L431.05 372.74 L431.28 372.84 L431.51 372.95 L431.74 373.05 L431.96 373.16 L432.19 373.28 L432.42 373.39 L432.65 373.50 L432.88 373.62 L433.11 373.73 L433.34 373.85" stroke="#c0e8ff" stroke-width="1.2" fill="none" stroke-linecap="round"/><path d="M472.55 426.59 L472.83 427.66 L473.09 428.73 L473.34 429.79 L473.57 430.85 L473.78 431.90 L473.98 432.95 L474.16 433.99 L474.32 435.03 L474.46 436.06 L474.59 437.08 L474.70 438.09 L474.79 439.10 L474.87 440.10 L474.93 441.09 L474.97 442.07 L474.99 443.05 L475.00 444.01 L474.98 444.96 L474.95 445.90 L474.91 446.83 L474.84 447.75 L474.76 448.66 L474.66 449.55 L474.54 450.43" stroke="#28b050" stroke-width="1.2" fill="none" stroke-linecap="round"/><path d="M474.99 444.37 L474.99 444.67 L474.98 444.96 L474.98 445.25 L474.97 445.55 L474.96 445.84 L474.94 446.13 L474.93 446.42 L474.91 446.70 L474.90 446.99 L474.88 447.28 L474.86 447.56 L474.83 447.84 L474.81 448.13 L474.78 448.41 L474.76 448.69 L474.73 448.97 L474.70 449.24 L474.66 449.52 L474.63 449.79 L474.59 450.07 L474.55 450.34 L474.52 450.61 L474.47 450.88 L474.43 451.15" stroke="#c0e8ff" stroke-width="1" fill="none" stroke-linecap="round"/><ellipse cx="362.00" cy="463.00" rx="32.00" ry="56.00" transform="rotate(-30 362.00 463.00)" fill="#0000b4" stroke="#1c1cf0" stroke-width="0.8"/><ellipse cx="362.80" cy="462.60" rx="28.80" ry="50.40" transform="rotate(-30 362.80 462.60)" fill="#0606d4" stroke="#0000a0" stroke-width="0.8"/><ellipse cx="362.50" cy="463.30" rx="24.00" ry="42.00" transform="rotate(-30 362.50 463.30)" fill="#a6a6a6" stroke="#e6e6e6" stroke-width="0.7"/><path d="M334.46 431.19 L334.84 430.53 L335.25 429.89 L335.67 429.28 L336.12 428.69 L336.58 428.13 L337.07 427.60 L337.58 427.09 L338.10 426.62 L338.64 426.17 L339.20 425.74 L339.78 425.35 L340.38 424.99 L340.99 424.65 L341.62 424.35 L342.27 424.07 L342.93 423.83 L343.61 423.61 L344.30 423.43 L345.00 423.27 L345.72 423.15 L346.45 423.05 L347.19 422.99 L347.95 422.96 L348.71 422.96" stroke="#34e034" stroke-width="4.8" fill="none"/><path d="M376.00 438.88 L376.77 439.77 L377.53 440.69 L378.27 441.62 L379.01 442.57 L379.73 443.53 L380.44 444.51 L381.14 445.50 L381.82 446.51 L382.49 447.53 L383.14 448.56 L383.77 449.61 L384.39 450.66 L385.00 451.72 L385.58 452.80 L386.15 453.88 L386.70 454.96 L387.23 456.06 L387.74 457.16 L388.24 458.26 L388.71 459.37 L389.16 460.48 L389.60 461.59 L390.01 462.71 L390.40 463.82" stroke="#34e034" stroke-width="4.8" fill="none"/><path d="M390.54 495.41 L390.16 496.07 L389.75 496.71 L389.33 497.32 L388.88 497.91 L388.42 498.47 L387.93 499.00 L387.42 499.51 L386.90 499.98 L386.36 500.43 L385.80 500.86 L385.22 501.25 L384.62 501.61 L384.01 501.95 L383.38 502.25 L382.73 502.53 L382.07 502.77 L381.39 502.99 L380.70 503.17 L380.00 503.33 L379.28 503.45 L378.55 503.55 L377.81 503.61 L377.05 503.64 L376.29 503.64" stroke="#34e034" stroke-width="4.8" fill="none"/><path d="M349.99 487.33 L348.91 486.09 L347.85 484.82 L346.82 483.51 L345.81 482.17 L344.83 480.80 L343.88 479.40 L342.96 477.98 L342.07 476.53 L341.21 475.06 L340.38 473.57 L339.59 472.06 L338.84 470.55 L338.13 469.01 L337.45 467.47 L336.81 465.93 L336.22 464.38 L335.67 462.83 L335.16 461.27 L334.69 459.73 L334.27 458.18 L333.89 456.65 L333.56 455.13 L333.28 453.62 L333.04 452.12" stroke="#8af08a" stroke-width="1" fill="none"/><path d="M342.44 439.83 L342.71 439.39 L343.00 438.96 L343.29 438.55 L343.60 438.16 L343.93 437.78 L344.27 437.42 L344.61 437.08 L344.98 436.76 L345.35 436.46 L345.74 436.17 L346.13 435.90 L346.54 435.66 L346.96 435.43 L347.39 435.22 L347.83 435.03 L348.28 434.85 L348.74 434.70 L349.21 434.57 L349.69 434.46 L350.17 434.36 L350.67 434.29 L351.17 434.24 L351.68 434.20 L352.20 434.19" stroke="#0303b0" stroke-width="8" fill="none" stroke-linecap="round"/><path d="M371.17 444.49 L371.83 445.21 L372.47 445.95 L373.11 446.70 L373.74 447.48 L374.36 448.27 L374.96 449.07 L375.55 449.89 L376.13 450.73 L376.69 451.57 L377.24 452.43 L377.78 453.30 L378.30 454.18 L378.80 455.07 L379.28 455.97 L379.75 456.87 L380.20 457.78 L380.64 458.70 L381.05 459.62 L381.45 460.55 L381.82 461.48 L382.18 462.41 L382.51 463.34 L382.83 464.27 L383.12 465.20" stroke="#0303b0" stroke-width="8" fill="none" stroke-linecap="round"/><path d="M382.56 486.77 L382.29 487.21 L382.00 487.64 L381.71 488.05 L381.40 488.44 L381.07 488.82 L380.73 489.18 L380.39 489.52 L380.02 489.84 L379.65 490.14 L379.26 490.43 L378.87 490.70 L378.46 490.94 L378.04 491.17 L377.61 491.38 L377.17 491.57 L376.72 491.75 L376.26 491.90 L375.79 492.03 L375.31 492.14 L374.83 492.24 L374.33 492.31 L373.83 492.36 L373.32 492.40 L372.80 492.41" stroke="#0303b0" stroke-width="8" fill="none" stroke-linecap="round"/><path d="M353.03 486.65 L352.16 485.74 L351.30 484.80 L350.46 483.84 L349.63 482.85 L348.82 481.83 L348.03 480.80 L347.25 479.74 L346.49 478.66 L345.75 477.57 L345.03 476.45 L344.33 475.32 L343.66 474.18 L343.00 473.02 L342.37 471.85 L341.77 470.67 L341.19 469.48 L340.64 468.29 L340.11 467.09 L339.61 465.88 L339.14 464.67 L338.69 463.46 L338.28 462.24 L337.89 461.03 L337.54 459.83" stroke="#0303b0" stroke-width="3.2" fill="none" stroke-linecap="round"/><ellipse cx="359.80" cy="462.30" rx="9.60" ry="16.80" transform="rotate(-30 359.80 462.30)" fill="#a4a4a4" stroke="#dedede" stroke-width="0.6"/><path d="M351.40 447.75 L346.20 450.85 L363.00 479.95 L368.20 476.85Z" fill="#a4a4a4"/><ellipse cx="354.60" cy="465.40" rx="9.60" ry="16.80" transform="rotate(-30 354.60 465.40)" fill="#c2c2c2" stroke="#e8e8e8" stroke-width="0.7"/><ellipse cx="353.30" cy="466.60" rx="6.40" ry="11.20" transform="rotate(-30 353.30 466.60)" fill="#8c8c8c" stroke="#d8d8d8" stroke-width="0.6"/><ellipse cx="355.30" cy="465.40" rx="4.80" ry="8.40" transform="rotate(-30 355.30 465.40)" fill="#a8a8a8" /></svg>
<div style="left:201px;top:428.75px;width:65.5px;height:16px;background:#0000e6"></div>
<span class="t" style="left:203.50px;top:432.50px;font-size:10px;color:#e6e6ff;transform:scaleX(0.877);transform-origin:0 0;">ZPM-4W-Cover</span>
<div style="left:201px;top:447px;width:46px;height:16px;background:#00e600"></div>
<span class="t" style="left:202.62px;top:450.50px;font-size:10px;color:#d8ffd8;transform:scaleX(0.883);transform-origin:0 0;">M4S00002</span>
<svg style="left:572.3px;top:337.8px" width="6" height="21"><path d="M5.4 0L0 4.7L5.4 9.4Z" fill="#2390d0"/><path d="M0 10.9L5.4 15.6L0 20.3Z" fill="#2390d0"/></svg>
<div style="left:578px;top:341.3px;width:215.60000000000002px;height:38.0px;border:1px solid #cdcdcd;box-shadow:inset 1px 1px 0 #fbfbfb,1px 1px 0 #fbfbfb"></div>
<div style="left:581.4px;top:338.3px;width:38.0px;height:6px;background:#f0f0f0"></div>
<span class="t k" style="left:581.73px;top:337.50px;font-size:8px;transform:scaleX(1.167);transform-origin:0 0;">表示対象</span>
<div style="left:582.9px;top:350.5px;width:9.6px;height:9.2px;background:#fff;border:1px solid #333"></div>
<svg style="left:582.9px;top:350.5px" width="10" height="10"><path d="M1.8 4.8L3.9 7L7.8 2.3" fill="none" stroke="#333" stroke-width="0.9"/></svg>
<span class="t" style="left:595.10px;top:350.50px;font-size:9px;transform:scaleX(0.918);transform-origin:0 0;">ZPM-4W-Cover</span>
<div style="left:582.9px;top:365.8px;width:9.6px;height:9.2px;background:#fff;border:1px solid #333"></div>
<svg style="left:582.9px;top:365.8px" width="10" height="10"><path d="M1.8 4.8L3.9 7L7.8 2.3" fill="none" stroke="#333" stroke-width="0.9"/></svg>
<span class="t" style="left:595.14px;top:366.00px;font-size:9px;transform:scaleX(0.857);transform-origin:0 0;">M4S00002</span>
<div style="left:578.6px;top:386.5px;width:215.0px;height:38.80000000000001px;border:1px solid #cdcdcd;box-shadow:inset 1px 1px 0 #fbfbfb,1px 1px 0 #fbfbfb"></div>
<div style="left:581.5px;top:383.5px;width:30px;height:6px;background:#f0f0f0"></div>
<span class="t k" style="left:581.92px;top:383.00px;font-size:8px;transform:scaleX(1.080);transform-origin:0 0;">3D表現</span>
<div style="left:583px;top:396.3px;width:9.6px;height:9.6px;border-radius:50%;background:#fff;border:1px solid #333"></div>
<div style="left:585.3px;top:398.6px;width:5px;height:5px;border-radius:50%;background:#1a1a1a"></div>
<span class="t k" style="left:593.71px;top:396.20px;font-size:8px;transform:scaleX(0.888);transform-origin:0 0;">ワイヤー＋シェーディング表示</span>
<div style="left:583px;top:411.5px;width:9.6px;height:9.6px;border-radius:50%;background:#fff;border:1px solid #333"></div>
<span class="t k" style="left:593.62px;top:411.60px;font-size:8px;transform:scaleX(0.981);transform-origin:0 0;">ワイヤー表示</span>
<div style="left:574px;top:398px;width:1px;height:66px;border-left:1px dotted #c0c0c0"></div>
<div style="left:574px;top:463.5px;width:3px;height:1px;background:#c0c0c0"></div>
<div style="left:574px;top:398px;width:3px;height:1px;background:#c8c8c8"></div>
<div class="btn" style="left:548.8px;top:525.8px;width:57px;height:14px"></div>
<span class="t k" style="left:558.00px;top:528.50px;font-size:8px;transform:scaleX(0.965);transform-origin:0 0;">パート移動</span>
<div class="btn" style="left:610px;top:525.8px;width:79.4px;height:14px"></div>
<span class="t k" style="left:618.53px;top:528.50px;font-size:8px;transform:scaleX(0.866);transform-origin:0 0;">アセンブリスナップ</span>
<div class="btn" style="left:697.2px;top:525.8px;width:94.5px;height:14px"></div>
<span class="t k" style="left:703.38px;top:528.50px;font-size:8px;transform:scaleX(1.021);transform-origin:0 0;">並べて表示に切り替え</span>
</body></html>
